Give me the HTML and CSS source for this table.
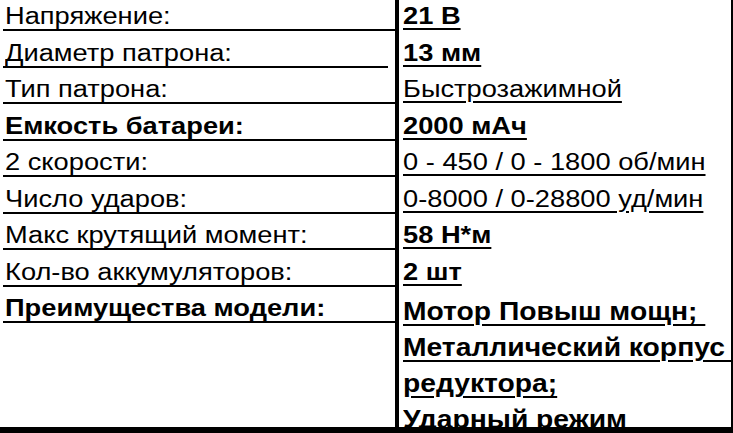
FILE: index.html
```html
<!DOCTYPE html>
<html lang="ru">
<head>
<meta charset="utf-8">
<title>Характеристики</title>
<link rel="stylesheet" href="styles.css">
</head>
<body>
<div class="sheet">
  <div class="specs">
    <div class="rule"></div>

    <div class="label"><span class="t">Напряжение:</span></div>
    <div class="value"><span class="t u b">21 В</span></div>

    <div class="label short"><span class="t">Диаметр патрона:</span></div>
    <div class="value"><span class="t u b">13 мм</span></div>

    <div class="label"><span class="t">Тип патрона:</span></div>
    <div class="value"><span class="t u">Быстрозажимной</span></div>

    <div class="label b"><span class="t">Емкость батареи:</span></div>
    <div class="value"><span class="t u b">2000 мАч</span></div>

    <div class="label"><span class="t">2 скорости:</span></div>
    <div class="value"><span class="t u">0 - 450 / 0 - 1800 об/мин</span></div>

    <div class="label"><span class="t">Число ударов:</span></div>
    <div class="value"><span class="t u">0-8000 / 0-28800 уд/мин</span></div>

    <div class="label"><span class="t">Макс крутящий момент:</span></div>
    <div class="value"><span class="t u b">58 Н*м</span></div>

    <div class="label"><span class="t">Кол-во аккумуляторов:</span></div>
    <div class="value"><span class="t u b">2 шт</span></div>

    <div class="label b"><span class="t">Преимущества модели:</span></div>
    <div class="value adv">
      <div class="line"><span class="n u">Мотор Повыш мощн;&nbsp;</span></div>
      <div class="line"><span class="n u">Металлический корпус&nbsp;</span></div>
      <div class="line"><span class="n u">редуктора;</span></div>
      <div class="line"><span class="n u">Ударный режим</span></div>
    </div>
  </div>
  <div class="bottom-bar"></div>
</div>
</body>
</html>
```
FILE: styles.css
```css
html, body {
  margin: 0;
  padding: 0;
  background: #fff;
}

.sheet {
  width: 733px;
  height: 433px;
  overflow: hidden;
  display: flex;
  flex-direction: column;
  font-family: "Liberation Sans", Arial, sans-serif;
  font-size: 23px;
  color: #000;
}

.specs {
  height: 427px;
  overflow: hidden;
  box-sizing: border-box;
  padding-left: 3px;
  border-right: 2px solid #000;
  display: grid;
  grid-template-columns: 392px 4px 1fr;
  grid-auto-rows: 31px;
  row-gap: 5.5px;
}

.rule {
  grid-column: 2;
  grid-row: 1 / span 20;
  background: #000;
}

.label {
  grid-column: 1;
  box-sizing: border-box;
  padding-top: 3px;
  padding-left: 2px;
  line-height: 26px;
  border-bottom: 2px solid #000;
  white-space: nowrap;
}

.label.short {
  margin-right: 7px;
}

.value {
  grid-column: 3;
  padding-top: 3px;
  padding-left: 4px;
  line-height: 26px;
  white-space: nowrap;
}

.t {
  display: inline-block;
  transform: scaleX(1.185);
  transform-origin: 0 50%;
}

.b {
  font-weight: bold;
}

.u {
  text-decoration: underline;
  text-decoration-thickness: 2px;
  text-underline-offset: 4px;
}

.adv {
  grid-row: span 6;
  font-family: "Liberation Sans Narrow", "Arial Narrow", "Liberation Sans", sans-serif;
  font-stretch: condensed;
  font-weight: bold;
  font-size: 25px;
  line-height: 36px;
  padding-top: 1px;
}

.n {
  display: inline-block;
  transform: scaleX(1.13);
  transform-origin: 0 50%;
}

.bottom-bar {
  height: 6px;
  background: #000;
}
```
